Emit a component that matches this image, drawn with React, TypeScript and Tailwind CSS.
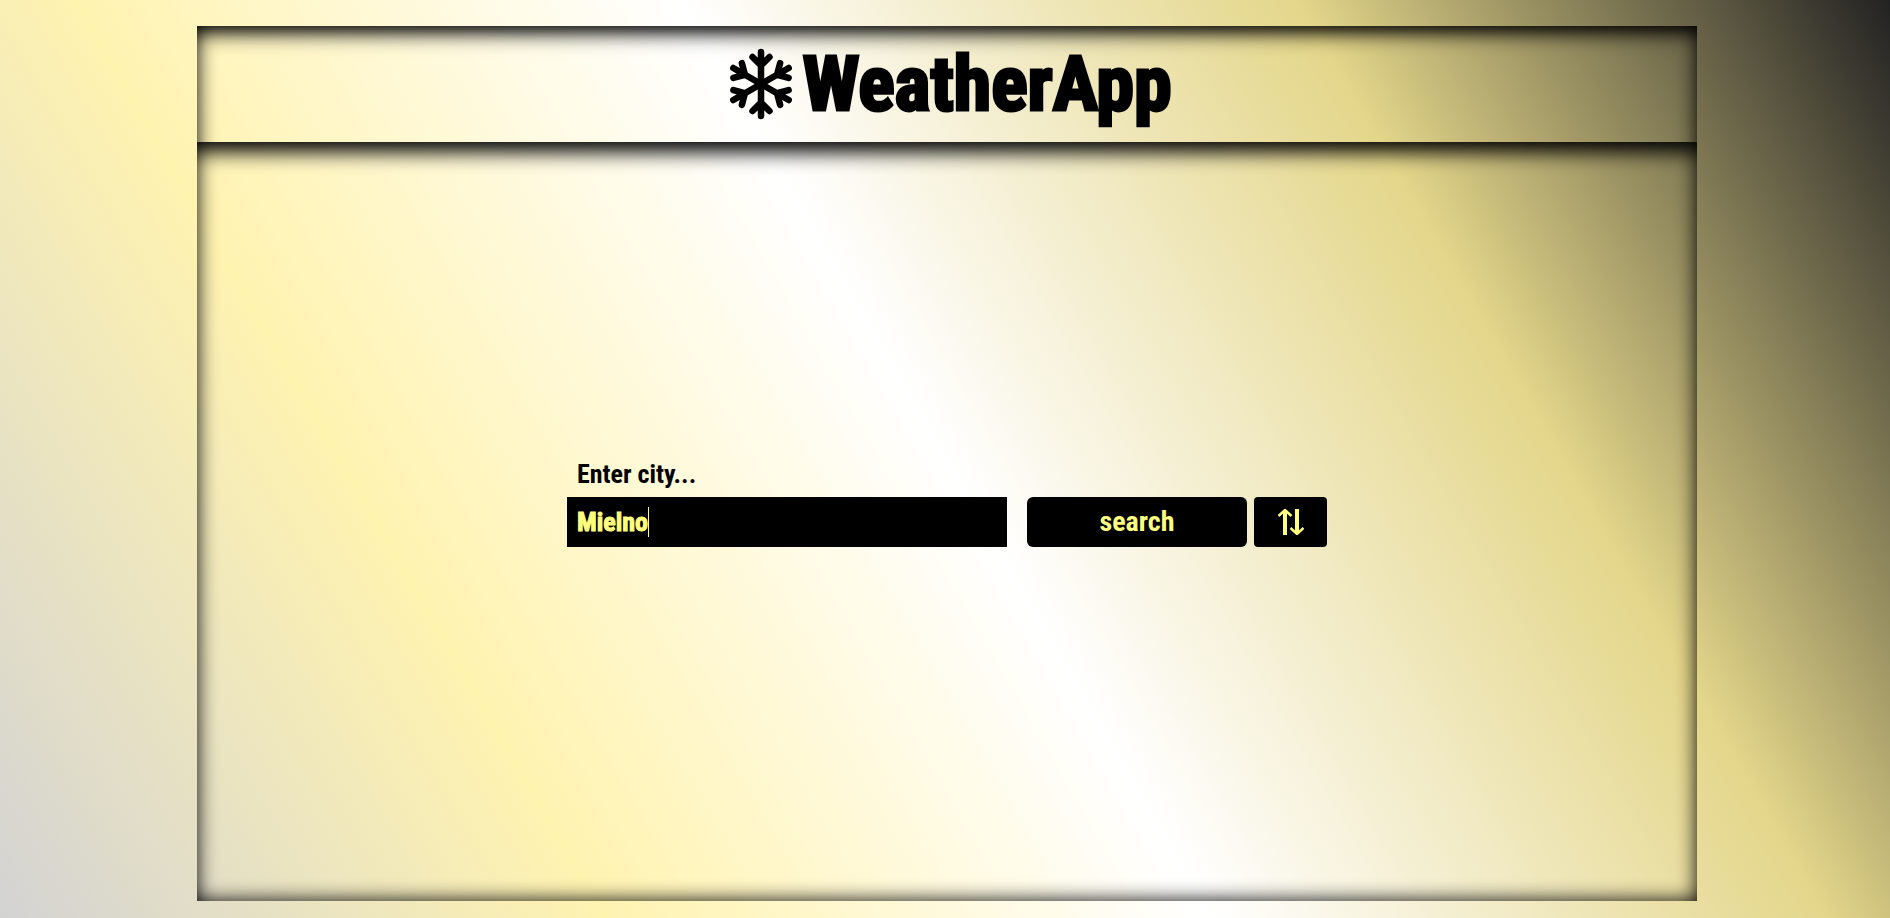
import { useState } from "react";

export default function App() {
  const [city, setCity] = useState("Mielno");
  return (
    <div className="flex min-h-screen flex-col bg-[linear-gradient(60deg,#d3d3d3_0%,#fff3b0_25%,#ffffff_50%,#e4d68a_75.5%,#222222_100%)] pt-[26px] pr-[193px] pb-[17px] pl-[197px] font-['Roboto_Condensed','Roboto',sans-serif] font-bold text-black">
      <div className="flex grow flex-col shadow-[inset_0_0_20px_0_#000]">
        <header className="flex h-[116px] items-center justify-center gap-[10px] pl-2 shadow-[inset_0_25px_24px_-22px_#000]">
          <svg viewBox="0 0 62 72" className="h-[72px] w-[62px]" fill="none" stroke="currentColor" strokeWidth="6.5" strokeLinecap="round" strokeLinejoin="round" aria-hidden="true">
            {[0, 60, 120, 180, 240, 300].map((a) => (
              <path key={a} d="M31 36V4M22.500 9l8.500 8.500l8.500-8.500" transform={`rotate(${a} 31 36)`} />
            ))}
          </svg>
          <h1 className="text-[76px] leading-[92px] [-webkit-text-stroke:3px_#000]">WeatherApp</h1>
        </header>
        <main className="flex grow items-center justify-center pb-[46px] shadow-[inset_0_30px_20px_-20px_#000]">
          <form className="flex items-end" onSubmit={(e) => e.preventDefault()}>
            <div className="flex flex-col">
              <label htmlFor="city" className="px-[10px] text-[26px] leading-[46px]">Enter city...</label>
              <div className="relative">
                <input id="city" className="block h-[50px] w-[440px] bg-black px-[10px] text-[26px] text-[#ffff80] outline-none [-webkit-text-stroke:1px_#ffff80]" value={city} onChange={(e) => setCity(e.target.value)} />
                <span className="absolute top-[10px] left-[81px] h-[30px] w-px bg-[#ffff80]" aria-hidden="true" />
              </div>
            </div>
            <button type="submit" className="ml-5 h-[50px] w-[220px] rounded-md bg-black text-[28px] text-[#ffff80]">search</button>
            <button type="button" aria-label="Sort" className="ml-[7px] flex h-[50px] w-[73px] items-center justify-center rounded bg-black text-[#ffff80]">
              <svg viewBox="0 0 26 26" className="size-[26px]" fill="none" stroke="currentColor" aria-hidden="true">
                <path d="M7 1.500V26M19 0V24.500" strokeWidth="4" />
                <path d="M.5 7L7 1l6.500 6M12.500 19l6.500 6l6.500-6" strokeWidth="2.500" />
              </svg>
            </button>
          </form>
        </main>
      </div>
    </div>
  );
}
